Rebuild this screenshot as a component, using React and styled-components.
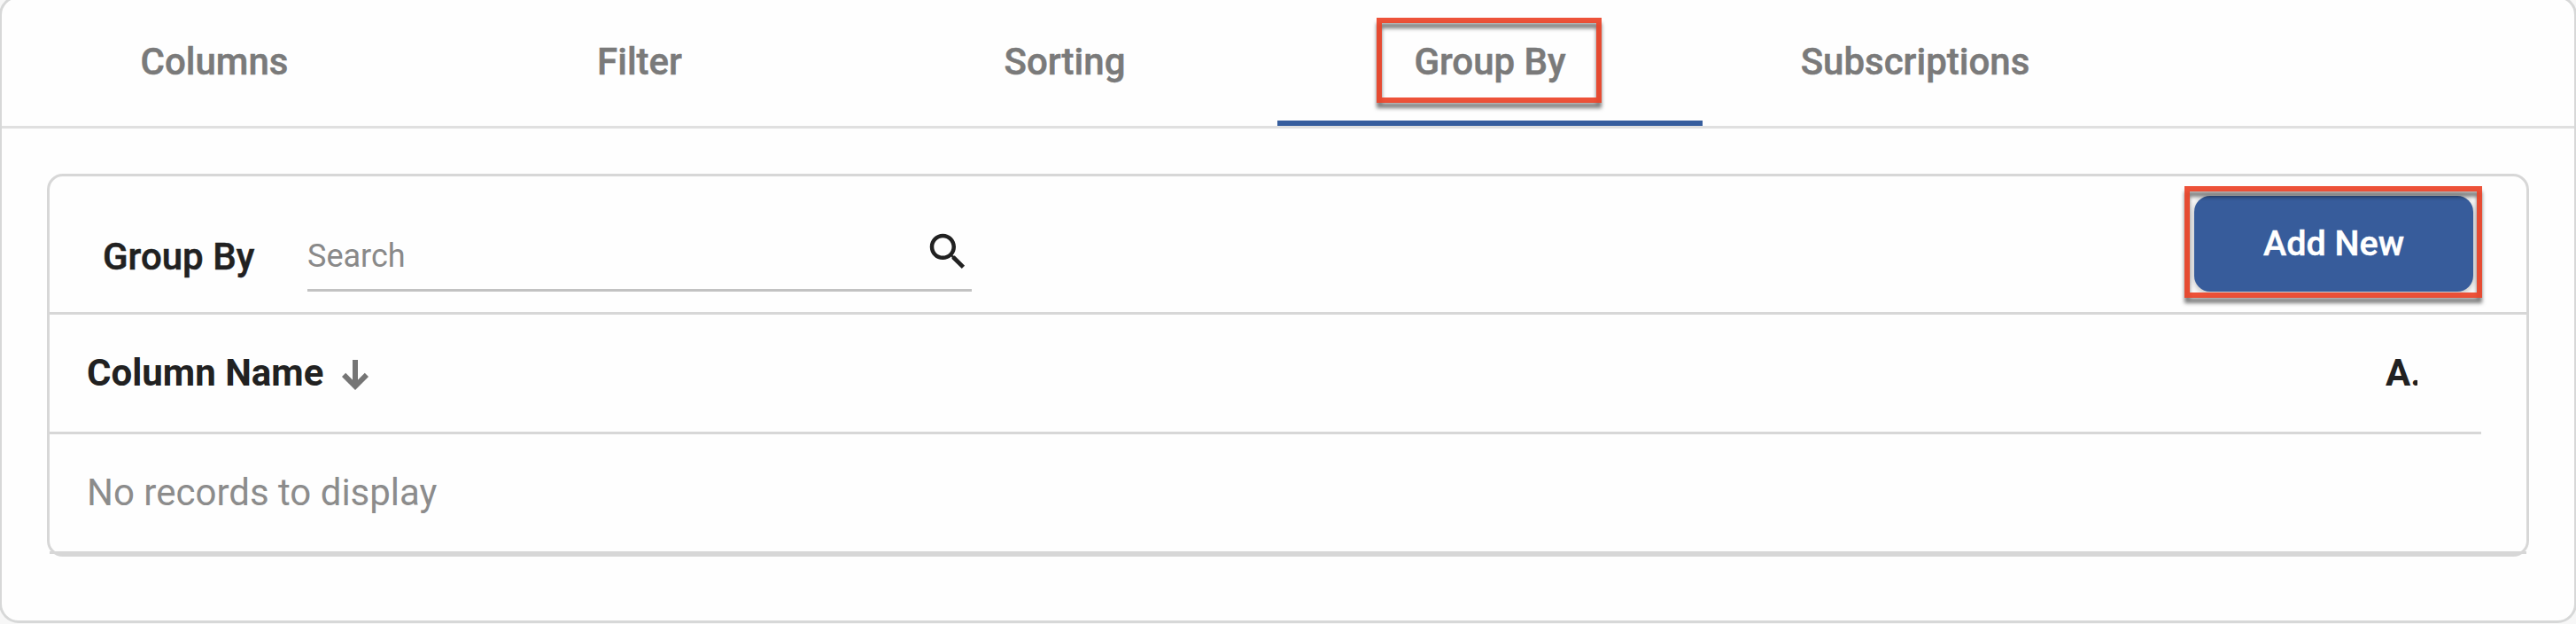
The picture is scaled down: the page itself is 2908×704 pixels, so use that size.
import styled, { createGlobalStyle } from "styled-components";
import { useState } from "react";

const GlobalStyle = createGlobalStyle`
  *,
  *::after {
    box-sizing: border-box;
  }

  body {
    margin: 0;
    background: #f7f7f7;
    font-family: Roboto, "Liberation Sans", sans-serif;
    overflow: hidden;
  }
`;

const Card = styled.div`
  width: 2910px;
  height: 708px;
  margin: -5px 0 0 -1px;
  border: 3px solid #d7d8d8;
  border-radius: 22px;
  background: #fefefe;
`;

const TabList = styled.nav`
  display: flex;
  height: 147px;
  border-bottom: 3px solid #e0e0e0;
`;

const Tab = styled.button`
  display: flex;
  align-items: center;
  justify-content: center;
  width: 480px;
  padding: 6px 0 0;
  border: none;
  border-bottom: 6px solid
    ${(props) => (props.$active ? "#375e9e" : "transparent")};
  background: none;
  color: #7a7a7a;
  font: 500 42px/48px Roboto, "Liberation Sans", sans-serif;
  -webkit-text-stroke: 0.5px;
`;

// Red frame drawn around the control it wraps
const Highlight = styled.span`
  display: block;
  position: relative;

  &::after {
    content: "";
    position: absolute;
    top: ${(props) => props.$top}px;
    left: calc(50% - ${(props) => props.$shift}px);
    width: ${(props) => props.$width}px;
    height: ${(props) => props.$height}px;
    border: 6px solid rgba(236, 67, 40, 0.92);
    filter: drop-shadow(0 6px 2px rgba(0, 0, 0, 0.55));
    pointer-events: none;
  }
`;

const Panel = styled.section`
  width: 2802px;
  height: 432px;
  margin: 51px 0 0 51px;
  border: 3px solid #d7d7d7;
  border-radius: 18px;
`;

const Toolbar = styled.header`
  display: flex;
  align-items: flex-start;
  height: 156px;
  padding: 22px 60px 0 60px;
  border-bottom: 3px solid #d7d7d7;
`;

const Title = styled.h2`
  width: 231px;
  margin: 45px 0 0;
  color: #212121;
  font-size: 42px;
  font-weight: 500;
  line-height: 48px;
  -webkit-text-stroke: 0.5px;
`;

const SearchField = styled.label`
  display: flex;
  width: 750px;
  height: 80px;
  margin-top: 28px;
  margin-right: auto;
  border-bottom: 3px solid #c2c2c2;
`;

const SearchInput = styled.input`
  flex: 1;
  min-width: 0;
  height: 42px;
  margin-top: 19px;
  padding: 0;
  border: none;
  outline: none;
  background: none;
  color: #212121;
  font: 400 36px/42px Roboto, "Liberation Sans", sans-serif;

  &::placeholder {
    color: #898989;
    opacity: 1;
  }
`;

const SearchIcon = styled.svg`
  width: 54px;
  height: 54px;
  margin-top: 8px;
  fill: #212121;
`;

const AddButton = styled.button`
  display: block;
  width: 315px;
  height: 108px;
  padding: 0;
  border: none;
  border-radius: 18px;
  background: #375c9b;
  box-shadow: 0 2px 8px rgba(0, 0, 0, 0.3);
  color: #fff;
  font: 500 39.5px/108px Roboto, "Liberation Sans", sans-serif;
  -webkit-text-stroke: 0.5px;
`;

const HeaderRow = styled.div`
  display: flex;
  align-items: center;
  width: 2745px;
  height: 135px;
  padding: 0 72px 0 42px;
  border-bottom: 3px solid #d7d7d7;
  color: #212121;
  font-size: 42px;
  font-weight: 700;
  line-height: 48px;
`;

const SortArrow = styled.svg`
  width: 30px;
  height: 36px;
  margin: 6px 0 0 21px;
  fill: none;
  stroke: #757575;
  stroke-width: 6;
`;

const ActionCell = styled.span`
  width: 36px;
  margin-left: auto;
  overflow: hidden;
  white-space: nowrap;
`;

const EmptyRow = styled.div`
  height: 135px;
  padding: 42px 42px 0;
  border-bottom: 3px solid #d7d7d7;
  color: #8c8c8c;
  font-size: 42px;
  line-height: 48px;
`;

const tabs = ["Columns", "Filter", "Sorting", "Group By", "Subscriptions"];

export default function App() {
  const [active, setActive] = useState("Group By");
  const [query, setQuery] = useState("");

  return (
    <>
      <GlobalStyle />
      <Card>
        <TabList>
          {tabs.map((tab) => (
            <Tab
              key={tab}
              $active={tab === active}
              onClick={() => setActive(tab)}
            >
              {tab === "Group By" ? (
                <Highlight $top={-26} $shift={128} $width={254} $height={96}>
                  {tab}
                </Highlight>
              ) : (
                tab
              )}
            </Tab>
          ))}
        </TabList>

        <Panel>
          <Toolbar>
            <Title>Group By</Title>
            <SearchField>
              <SearchInput
                placeholder="Search"
                value={query}
                onChange={(e) => setQuery(e.target.value)}
              />
              <SearchIcon viewBox="0 0 24 24">
                <path d="M15.5 14h-.79l-.28-.27C15.41 12.59 16 11.11 16 9.5 16 5.91 13.09 3 9.5 3S3 5.91 3 9.5 5.91 16 9.5 16c1.61 0 3.09-.59 4.23-1.57l.27.28v.79l5 4.99L20.49 19l-4.99-5zm-6 0C7.01 14 5 11.99 5 9.5S7.01 5 9.5 5 14 7.01 14 9.5 11.99 14 9.5 14z" />
              </SearchIcon>
            </SearchField>
            <Highlight $top={-11} $shift={168.5} $width={336} $height={126}>
              <AddButton>Add New</AddButton>
            </Highlight>
          </Toolbar>

          <HeaderRow>
            Column Name
            <SortArrow viewBox="0 0 30 36">
              <path d="M15 0v29M2.1 16.900L15 29.800l12.900-12.900" />
            </SortArrow>
            <ActionCell>A.</ActionCell>
          </HeaderRow>
          <EmptyRow>No records to display</EmptyRow>
        </Panel>
      </Card>
    </>
  );
}
